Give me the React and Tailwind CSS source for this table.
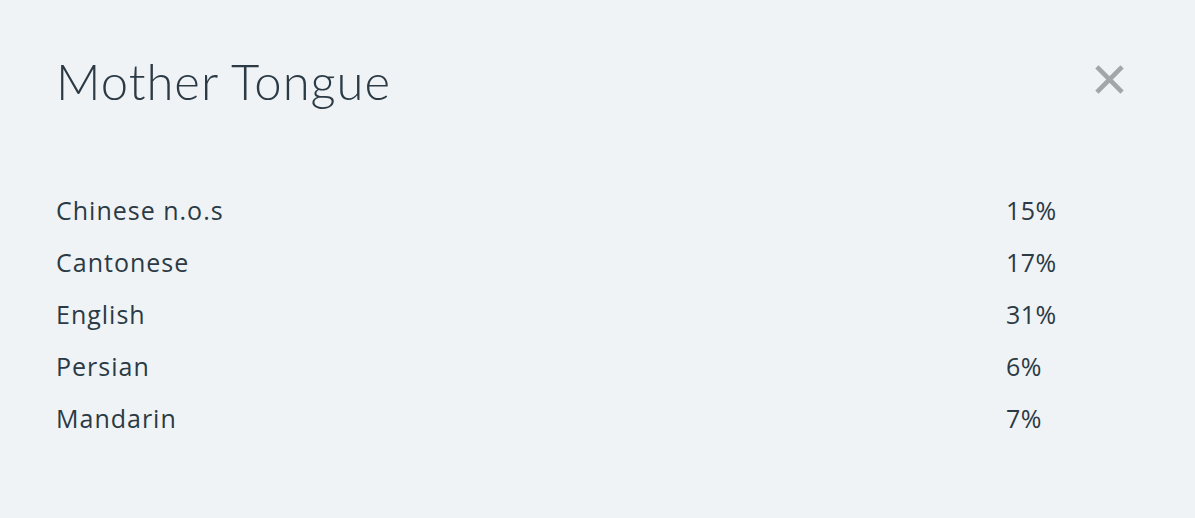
import React from 'react';

const rows = [
  { name: 'Chinese n.o.s', pct: '15%' },
  { name: 'Cantonese', pct: '17%' },
  { name: 'English', pct: '31%' },
  { name: 'Persian', pct: '6%' },
  { name: 'Mandarin', pct: '7%' },
];

export default function App() {
  return (
    <div className="min-h-[518px] w-full bg-[#eff3f6] text-[#2b3a44] font-['Lato',sans-serif] pl-14 pr-[70px] pt-[49px]">
      <div className="flex items-start justify-between">
        <h1 className="text-[49px] font-light leading-[64px] tracking-[1px]">Mother Tongue</h1>
        <button className="mt-[15px] text-[#a3a6a9]" aria-label="Close">
          <svg width="31" height="31" viewBox="0 0 32 32" fill="none" stroke="currentColor" strokeWidth="4.8">
            <path d="M3 3 L29 29 M29 3 L3 29" />
          </svg>
        </button>
      </div>
      <div className="mt-[72px] flex flex-col font-['Open_Sans',sans-serif]">
        {rows.map((r) => (
          <div key={r.name} className="flex h-[52px] items-center text-[25px] font-medium tracking-[1px]">
            <span className="w-[950px]">{r.name}</span>
            <span className="tracking-[0.5px]">{r.pct}</span>
          </div>
        ))}
      </div>
    </div>
  );
}
